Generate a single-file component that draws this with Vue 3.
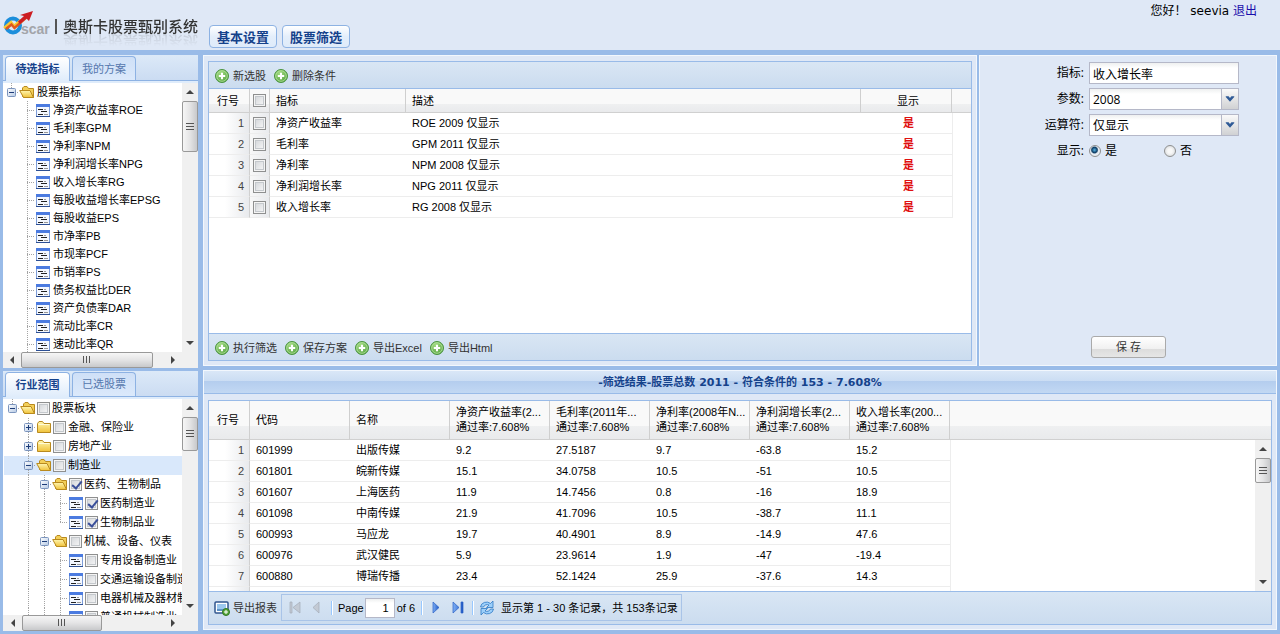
<script setup>
import { ref } from 'vue'

const indicators = ['净资产收益率ROE', '毛利率GPM', '净利率NPM', '净利润增长率NPG', '收入增长率RG', '每股收益增长率EPSG', '每股收益EPS', '市净率PB', '市现率PCF', '市销率PS', '债务权益比DER', '资产负债率DAR', '流动比率CR', '速动比率QR']

const indicatorTree = [
  { cells: ['-'], icon: 'open', text: '股票指标' },
  ...indicators.map((text) => ({ cells: ['', 't'], icon: 'leaf', text })),
]

const industryTree = [
  { cells: ['-'], icon: 'open', check: true, on: false, text: '股票板块' },
  { cells: ['', '+'], icon: 'closed', check: true, on: false, text: '金融、保险业' },
  { cells: ['', '+'], icon: 'closed', check: true, on: false, text: '房地产业' },
  { cells: ['', '-l'], icon: 'open', check: true, on: false, text: '制造业', selected: true },
  { cells: ['', 'l', '-l'], icon: 'open', check: true, on: true, text: '医药、生物制品' },
  { cells: ['', 'l', 'l', 't'], icon: 'leaf', check: true, on: true, text: '医药制造业' },
  { cells: ['', 'l', 'l', 'e'], icon: 'leaf', check: true, on: true, text: '生物制品业' },
  { cells: ['', 'l', '-l'], icon: 'open', check: true, on: false, text: '机械、设备、仪表' },
  { cells: ['', 'l', 'l', 't'], icon: 'leaf', check: true, on: false, text: '专用设备制造业' },
  { cells: ['', 'l', 'l', 't'], icon: 'leaf', check: true, on: false, text: '交通运输设备制造业' },
  { cells: ['', 'l', 'l', 't'], icon: 'leaf', check: true, on: false, text: '电器机械及器材制造业' },
  { cells: ['', 'l', 'l', 't'], icon: 'leaf', check: true, on: false, text: '普通机械制造业' },
]

const panels = [
  { id: 'indicators', tabs: ['待选指标', '我的方案'], rows: indicatorTree },
  { id: 'industries', tabs: ['行业范围', '已选股票'], rows: industryTree },
]

const conditions = [
  ['净资产收益率', 'ROE 2009 仅显示'],
  ['毛利率', 'GPM 2011 仅显示'],
  ['净利率', 'NPM 2008 仅显示'],
  ['净利润增长率', 'NPG 2011 仅显示'],
  ['收入增长率', 'RG 2008 仅显示'],
]

const resultHeads = ['净资产收益率(2...', '毛利率(2011年...', '净利率(2008年N...', '净利润增长率(2...', '收入增长率(200...']

const results = [
  ['601999', '出版传媒', '9.2', '27.5187', '9.7', '-63.8', '15.2'],
  ['601801', '皖新传媒', '15.1', '34.0758', '10.5', '-51', '10.5'],
  ['601607', '上海医药', '11.9', '14.7456', '0.8', '-16', '18.9'],
  ['601098', '中南传媒', '21.9', '41.7096', '10.5', '-38.7', '11.1'],
  ['600993', '马应龙', '19.7', '40.4901', '8.9', '-14.9', '47.6'],
  ['600976', '武汉健民', '5.9', '23.9614', '1.9', '-47', '-19.4'],
  ['600880', '博瑞传播', '23.4', '52.1424', '25.9', '-37.6', '14.3'],
  ['', '', '', '', '', '', ''],
]

const topActions = ['新选股', '删除条件']
const bottomActions = ['执行筛选', '保存方案', '导出Excel', '导出Html']

const shown = ref('yes')
</script>

<template>
  <div class="app">
    <svg class="defs" width="0" height="0" aria-hidden="true">
      <defs>
        <linearGradient id="folderFill" x1="0" y1="0" x2="0" y2="1">
          <stop offset="0" stop-color="#fff6b0" /><stop offset="1" stop-color="#f0c23a" />
        </linearGradient>
        <radialGradient id="addFill" cx=".4" cy=".3" r=".8">
          <stop offset="0" stop-color="#a4dc84" /><stop offset="1" stop-color="#4c9c38" />
        </radialGradient>
        <linearGradient id="boxFill" x1="0" y1="0" x2="1" y2="1">
          <stop offset="0" stop-color="#ffffff" /><stop offset="1" stop-color="#b4c8e4" />
        </linearGradient>
        <linearGradient id="blueFill" x1="0" y1="0" x2="1" y2="0">
          <stop offset="0" stop-color="#7fb0f5" /><stop offset="1" stop-color="#1c56c4" />
        </linearGradient>
        <symbol id="add" viewBox="0 0 16 16">
          <circle cx="8" cy="8" r="6.5" fill="url(#addFill)" stroke="#4a9440" />
          <circle cx="8" cy="8" r="5.3" fill="none" stroke="#b8e4a0" stroke-width=".8" />
          <path d="M8 4.8V11.2M4.8 8H11.2" stroke="#fff" stroke-width="2" />
        </symbol>
        <symbol id="open" viewBox="0 0 16 16">
          <path d="M3.5 12.5V4L5 2.5H8L9.5 4.5H14.5V13.5H5Z" fill="#f3cf58" stroke="#b98a1e" />
          <path d="M.7 6.5H11L14.5 13.5H4.5Z" fill="url(#folderFill)" stroke="#b98a1e" />
        </symbol>
        <symbol id="closed" viewBox="0 0 16 16">
          <path d="M1.5 13.5V4.5L3 2.5H6.5L8 4.5H14.5V13.5Z" fill="url(#folderFill)" stroke="#b98a1e" />
          <path d="M2.5 5.5H13.5" stroke="#fffbd8" />
        </symbol>
        <symbol id="leaf" viewBox="0 0 16 16">
          <rect x="1.5" y="2.5" width="13" height="12" fill="#f4f8ff" stroke="#7c9cd8" />
          <rect x="1" y="2" width="14" height="3" fill="#4b7be0" />
          <path d="M1 14.5H15" stroke="#2c4f94" />
          <path d="M3 7.5H8M6 9.5H12M3 12.5H8" stroke="#222" />
          <path d="M9 12.5H13M9 7.500H11" stroke="#999" />
        </symbol>
      </defs>
    </svg>

    <header class="top">
      <svg class="logo" width="60" height="32" viewBox="0 0 60 32" role="img" aria-label="Oscar">
        <circle cx="10" cy="16.500" r="7" fill="none" stroke="#1c8edb" stroke-width="4" />
        <path d="M1 19L8 13L11 17L18 11" fill="none" stroke="#f8c832" stroke-width="2.500" />
        <path d="M3 20L8.500 15.500L11.500 19L25 7" fill="none" stroke="#e0581c" stroke-width="2.500" />
        <path d="M17 6L30 2L26 12L23.500 9.500L17 15L15 12.500L21 7Z" fill="#cc1c22" />
        <text x="18" y="25" class="logo-text">scar</text>
        <path d="M53 10V25" stroke="#555" stroke-width="2" />
      </svg>
      <h1>奥斯卡股票甄别系统</h1>
      <nav>
        <button type="button">基本设置</button>
        <button type="button">股票筛选</button>
      </nav>
      <p class="user">您好！ seevia <a href="#">退出</a></p>
    </header>

    <main class="work">
      <aside class="side">
        <section v-for="panel in panels" :key="panel.id" class="tabpanel" :class="panel.id">
          <div class="tabs">
            <button type="button" class="tab active">{{ panel.tabs[0] }}</button>
            <button type="button" class="tab">{{ panel.tabs[1] }}</button>
          </div>
          <div class="treebox">
            <ul class="tree">
              <li v-for="row in panel.rows" :key="row.text" :class="{ selected: row.selected }">
                <svg v-for="(cell, i) in row.cells" :key="i" class="cell" viewBox="0 0 16 19" width="16" height="19">
                  <g fill="none" stroke="#a4a4a4" stroke-dasharray="1 1">
                    <path v-if="['l', 't', '+', '-l'].includes(cell)" d="M8.500 0V19" />
                    <path v-if="['e', '-'].includes(cell)" d="M8.500 0V9" />
                    <path v-if="cell && cell !== 'l'" d="M8 9.500H16" />
                  </g>
                  <g v-if="cell[0] === '-' || cell === '+'">
                    <rect x="4.500" y="5.500" width="8" height="8" rx="1" fill="url(#boxFill)" stroke="#7b94bd" />
                    <path d="M6 9.500H11" stroke="#1d3c78" />
                    <path v-if="cell === '+'" d="M8.500 7V12" stroke="#1d3c78" />
                  </g>
                </svg>
                <svg class="icon" width="16" height="16"><use :href="'#' + row.icon" /></svg>
                <label>
                  <input v-if="row.check" type="checkbox" :checked="row.on" />
                  <span>{{ row.text }}</span>
                </label>
              </li>
            </ul>
            <div class="vbar"><i class="up"></i><b></b><i class="down"></i></div>
            <div class="hbar"><i class="left"></i><b></b><i class="right"></i></div>
          </div>
        </section>
      </aside>

      <div class="content">
        <div class="upper">
          <section class="pane">
            <div class="grid">
              <div class="toolbar">
                <button v-for="a in topActions" :key="a" type="button"><svg width="16" height="16"><use href="#add" /></svg>{{ a }}</button>
              </div>
              <div class="body">
                <table class="conditions">
                  <colgroup>
                    <col class="c-num" /><col class="c-check" /><col class="c-name" /><col /><col class="c-show" /><col class="c-rest" />
                  </colgroup>
                  <thead>
                    <tr>
                      <th>行号</th>
                      <th class="check"><input type="checkbox" aria-label="全选" /></th>
                      <th>指标</th><th>描述</th><th class="center">显示</th><th class="rest"></th>
                    </tr>
                  </thead>
                  <tbody>
                    <tr v-for="(c, i) in conditions" :key="c[0]">
                      <td class="num">{{ i + 1 }}</td>
                      <td class="check"><input type="checkbox" :aria-label="c[0]" /></td>
                      <td>{{ c[0] }}</td><td>{{ c[1] }}</td><td class="yes">是</td><td class="rest"></td>
                    </tr>
                  </tbody>
                </table>
              </div>
              <div class="toolbar bottom">
                <button v-for="a in bottomActions" :key="a" type="button"><svg width="16" height="16"><use href="#add" /></svg>{{ a }}</button>
              </div>
            </div>
          </section>

          <form class="pane form" @submit.prevent>
            <label for="f-name">指标:</label>
            <input id="f-name" class="field" type="text" value="收入增长率" />
            <label for="f-year">参数:</label>
            <div class="combo">
              <select id="f-year" class="field"><option>2008</option></select>
              <svg width="17" height="20" viewBox="0 0 17 20"><path d="M4 7H7L8.500 9L10 7H13V8L8.500 13L4 8Z" fill="#2f5a96" /></svg>
            </div>
            <label for="f-op">运算符:</label>
            <div class="combo">
              <select id="f-op" class="field"><option>仅显示</option></select>
              <svg width="17" height="20" viewBox="0 0 17 20"><path d="M4 7H7L8.500 9L10 7H13V8L8.500 13L4 8Z" fill="#2f5a96" /></svg>
            </div>
            <span class="caption">显示:</span>
            <div class="radios">
              <label><input v-model="shown" type="radio" name="shown" value="yes" />是</label>
              <label><input v-model="shown" type="radio" name="shown" value="no" />否</label>
            </div>
            <button type="submit" class="save">保 存</button>
          </form>
        </div>

        <section class="pane results">
          <h2>-筛选结果-股票总数 2011 - 符合条件的 153 - 7.608%</h2>
          <div class="grid">
            <div class="body">
              <table class="stocks">
                <colgroup>
                  <col class="c-num" /><col v-for="n in 7" :key="n" class="c-val" /><col />
                </colgroup>
                <thead>
                  <tr>
                    <th>行号</th><th>代码</th><th>名称</th>
                    <th v-for="h in resultHeads" :key="h"><div>{{ h }}</div><div>通过率:7.608%</div></th>
                    <th class="rest"></th>
                  </tr>
                </thead>
                <tbody>
                  <tr v-for="(r, i) in results" :key="i">
                    <td class="num">{{ r[0] && i + 1 }}</td>
                    <td v-for="(v, j) in r" :key="j">{{ v }}</td>
                    <td class="rest"></td>
                  </tr>
                </tbody>
              </table>
              <div class="vbar"><i class="up"></i><b></b><i class="down"></i></div>
            </div>
            <div class="toolbar bottom paging">
              <button type="button">
                <svg width="16" height="16" viewBox="0 0 16 16">
                  <rect x="1" y="2" width="13" height="11" rx="1" fill="#fff" stroke="#30568f" stroke-width="1.500" />
                  <rect x="3" y="4" width="9" height="5" fill="#9cc8ee" /><path d="M3 9H12V11H3Z" fill="#5c92c8" />
                  <circle cx="12" cy="12" r="3.500" fill="#58a83c" stroke="#2f7420" /><path d="M12 10V14M10 12H14" stroke="#fff" />
                </svg>导出报表
              </button>
              <div class="pager">
                <button type="button" aria-label="第一页"><svg width="16" height="16" viewBox="0 0 16 16"><path d="M3 2H5V13H3ZM13 2V13L6 7.500Z" fill="#c3cad4" stroke="#a4acb8" stroke-width=".7" /></svg></button>
                <button type="button" aria-label="上一页"><svg width="16" height="16" viewBox="0 0 16 16"><path d="M10 2V13L4 7.500Z" fill="#c3cad4" stroke="#a4acb8" stroke-width=".7" /></svg></button>
                <span class="sep"></span>
                <label for="page">Page</label>
                <input id="page" type="text" value="1" />
                <span class="of">of 6</span>
                <span class="sep"></span>
                <button type="button" aria-label="下一页"><svg width="16" height="16" viewBox="0 0 16 16"><path d="M5 2V13L11 7.500Z" fill="url(#blueFill)" stroke="#2a60c4" stroke-width=".7" /></svg></button>
                <button type="button" aria-label="最后一页"><svg width="16" height="16" viewBox="0 0 16 16"><path d="M3 2V13L9 7.500ZM11 2H13V13H11Z" fill="url(#blueFill)" stroke="#2a60c4" stroke-width=".7" /></svg></button>
                <span class="sep"></span>
                <button type="button" aria-label="刷新"><svg width="16" height="16" viewBox="0 0 16 16">
                  <path d="M1.500 7A6 5.500 0 0 1 11.500 3.500L14 1V7.500H7.500L10 5A4 4 0 0 0 4.500 7Z" fill="#9ccffa" stroke="#2f78c4" stroke-width=".8" />
                  <path d="M14.500 9A6 5.500 0 0 1 4.500 12.500L2 15V8.500H8.500L6 11A4 4 0 0 0 11.500 9Z" fill="#9ccffa" stroke="#2f78c4" stroke-width=".8" />
                </svg></button>
                <span class="msg">显示第 1 - 30 条记录，共 153条记录</span>
              </div>
            </div>
          </div>
        </section>
      </div>
    </main>
  </div>
</template>

<style>
body {
  background: #99bbe8;
}
</style>

<style scoped>
* {
  box-sizing: border-box;
}
.app {
  display: flex;
  flex-direction: column;
  height: 100vh;
  overflow: hidden;
  background: #99bbe8;
  font: 11px/16px "Liberation Sans", "Noto Sans CJK SC", sans-serif;
  color: #000;
}
.defs {
  position: absolute;
}
button,
input,
select {
  font: inherit;
  color: inherit;
  margin: 0;
}
button {
  padding: 0;
  border: 0;
  background: none;
}

/* header */
.top {
  display: flex;
  height: 50px;
  flex: none;
  padding-left: 3px;
  background: #dfe8f6;
}
.logo {
  margin-top: 9px;
  flex: none;
}
.logo-text {
  font: bold 14px "Liberation Sans", sans-serif;
  fill: #a3a5aa;
}
h1 {
  width: 146px;
  margin: 15px 0 0;
  font: 500 15px/22px "Noto Sans CJK SC", sans-serif;
  color: #333;
  white-space: nowrap;
  height: 22px;
  -webkit-box-reflect: below -6px linear-gradient(transparent 30%, rgba(0, 0, 0, 0.2));
}
nav {
  display: flex;
  gap: 5px;
  padding-top: 25px;
}
nav button {
  width: 68px;
  height: 23px;
  border: 1px solid #8db2e3;
  border-radius: 4px;
  background: linear-gradient(#fff, #e4eefb 50%, #deebfa);
  font: bold 13px/20px "Noto Sans CJK SC", sans-serif;
  color: #15428b;
}
.user {
  margin: 2px 23px 0 auto;
  font: 12px/18px "DejaVu Sans", "Noto Sans CJK SC", sans-serif;
}
.user a {
  color: #1a0dab;
  text-decoration: none;
}

/* layout */
.work {
  flex: 1;
  min-height: 0;
  display: grid;
  grid-template-columns: 195px minmax(0, 1fr);
  gap: 5px;
  padding: 5px 3px 3px;
}
.side {
  display: grid;
  grid-template-rows: 6fr 5fr;
  gap: 3px;
  min-height: 0;
}
.content {
  display: grid;
  grid-template-rows: 6fr 5fr;
  gap: 4px;
  min-height: 0;
  padding-bottom: 1px;
}

/* side panels */
.tabpanel {
  display: flex;
  flex-direction: column;
  min-height: 0;
  background: #dfecfb;
}
.tabs {
  display: flex;
  gap: 2px;
  height: 26px;
  flex: none;
  padding: 1px 2px 0;
  border-bottom: 1px solid #8db2e3;
  background: linear-gradient(#dce9f8, #cbdcf2);
}
.tab {
  height: 24px;
  width: 64px;
  border: 1px solid #8db2e3;
  border-bottom: 0;
  border-radius: 4px 4px 0 0;
  background: linear-gradient(#cfe0f7, #dbe9fb);
  color: #5577ad;
}
.tab.active {
  width: 65px;
  height: 25px;
  background: linear-gradient(#fff, #dfecfb);
  font-weight: bold;
  color: #15428b;
}
.treebox {
  flex: 1;
  min-height: 0;
  margin-top: 2px;
  display: grid;
  grid-template: minmax(0, 1fr) 16px / minmax(0, 1fr) 16px;
  background: #f0f0f0;
}
.tree {
  list-style: none;
  margin: 0;
  padding: 0;
  overflow: hidden;
  background: #fff;
}
.industries .tree,
.industries .hbar {
  padding-left: 1px;
}
.tree li {
  display: flex;
  align-items: center;
  height: 18px;
  overflow: hidden;
  white-space: nowrap;
}
.industries li {
  height: 19px;
}
.tree .selected {
  background: #d9e8fb;
}
.cell,
.icon {
  flex: none;
}
.tree label {
  display: flex;
  align-items: center;
  gap: 2px;
  padding-left: 2px;
}
.industries label {
  padding-left: 1px;
}
input[type="checkbox"] {
  appearance: none;
  display: block;
  flex: none;
  width: 13px;
  height: 13px;
  border: 1px solid #8e8f8f;
  background: linear-gradient(135deg, #cfd2d6, #fafafa);
  box-shadow: inset 0 0 0 1px #f4f4f4, inset 0 0 0 2px #c4c8cc;
}
input[type="checkbox"]:checked::after {
  content: "";
  display: block;
  width: 4px;
  height: 8px;
  margin: 0 0 0 4px;
  border: solid #3a4f9a;
  border-width: 0 2px 2px 0;
  transform: rotate(40deg);
}

/* scrollbars */
.vbar,
.hbar {
  display: flex;
  background: #f0f0f0;
}
.vbar {
  flex-direction: column;
  width: 16px;
}
.vbar i,
.hbar i {
  display: flex;
  align-items: center;
  justify-content: center;
  width: 16px;
  height: 18px;
  flex: none;
}
.hbar i {
  width: 18px;
  height: 16px;
}
.vbar i::before,
.hbar i::before {
  content: "";
  border: 4px solid transparent;
}
.vbar .up::before {
  border-width: 0 4px 4px;
  border-bottom-color: #444;
}
.vbar .down::before {
  border-width: 4px 4px 0;
  border-top-color: #444;
}
.hbar .left::before {
  border-width: 4px 4px 4px 0;
  border-right-color: #444;
}
.hbar .right::before {
  border-width: 4px 0 4px 4px;
  border-left-color: #444;
}
.vbar .down {
  margin-top: auto;
}
.hbar .right {
  margin-left: auto;
}
.vbar b,
.hbar b {
  display: flex;
  align-items: center;
  justify-content: center;
  border: 1px solid #999;
  border-radius: 2px;
  background: linear-gradient(90deg, #f6f6f6, #e4e4e5 50%, #c8c9cb);
}
.vbar b::before {
  content: "";
  width: 8px;
  height: 8px;
  background: repeating-linear-gradient(#555 0 1px, transparent 1px 3px);
}
.hbar b {
  width: 132px;
  background: linear-gradient(#f6f6f6, #e4e4e5 50%, #c8c9cb);
}
.hbar b::before {
  content: "";
  width: 8px;
  height: 7px;
  background: repeating-linear-gradient(90deg, #555 0 1px, transparent 1px 3px);
}
.industries .hbar b {
  width: 80px;
}
.indicators .vbar b {
  height: 51px;
}
.industries .vbar b {
  height: 34px;
}
.results .vbar b {
  height: 25px;
}

/* right side panes */
.upper {
  display: grid;
  grid-template-columns: minmax(0, 1fr) 298px;
  gap: 2px;
  min-height: 0;
}
.pane {
  display: flex;
  min-width: 0;
  min-height: 0;
  padding: 5px 4px 4px;
  border: 1px solid #f2f7fd;
  background: #dfe8f6;
}
.grid {
  flex: 1;
  display: flex;
  flex-direction: column;
  min-width: 0;
  min-height: 0;
  border: 1px solid #99bbe8;
  background: #fff;
}
.toolbar {
  display: flex;
  align-items: center;
  gap: 7px;
  flex: none;
  height: 27px;
  padding: 1px 0 0 5px;
  border-bottom: 1px solid #99bbe8;
  background: linear-gradient(#d9e6f4, #cbdcef);
  color: #333;
}
.toolbar.bottom {
  border-top: 1px solid #99bbe8;
  border-bottom: 0;
}
.toolbar button {
  display: flex;
  align-items: center;
  gap: 3px;
}
.body {
  position: relative;
  flex: 1;
  min-height: 0;
  overflow: hidden;
}
table {
  width: 100%;
  table-layout: fixed;
  border-collapse: separate;
  border-spacing: 0;
}
.c-num {
  width: 41px;
}
.c-check {
  width: 20px;
}
.c-name {
  width: 136px;
}
.c-show {
  width: 91px;
}
.c-rest {
  width: 19px;
}
.c-val {
  width: 100px;
}
th,
td {
  padding: 0 2px 0 6px;
  text-align: left;
  font-weight: normal;
  white-space: nowrap;
  overflow: hidden;
}
th {
  height: 24px;
  border-right: 1px solid #cfcfcf;
  border-bottom: 1px solid #d0d0d0;
  background: linear-gradient(#f9f9f9 65%, #eff0f1 65%, #e9eaec);
}
th:first-child {
  padding-left: 8px;
}
.stocks th {
  height: 39px;
  line-height: 15px;
}
td {
  height: 21px;
  border-bottom: 1px solid #ededed;
}
th.rest {
  border-right: 0;
}
td.rest {
  border-bottom: 0;
  border-left: 1px solid #ededed;
}
.num {
  padding-right: 5px;
  border-right: 1px solid #d0d0d0;
  background: linear-gradient(90deg, #fff 40%, #e8eaed);
  text-align: right;
  color: #444;
}
.check {
  padding: 0 3px;
  border-right: 1px solid #d0d0d0;
}
td.check {
  background: linear-gradient(90deg, #f8f8f8, #e8eaed);
}
.center {
  text-align: center;
}
.yes {
  text-align: center;
  font-weight: bold;
  color: #e01010;
}

/* form */
.form {
  display: grid;
  grid-template-columns: 1fr 150px;
  grid-template-rows: 22px 22px 22px 22px 1fr;
  gap: 4px 5px;
  padding: 6px 37px 7px 0;
  font-family: "Open Sans", "Noto Sans CJK SC", sans-serif;
  font-size: 12px;
}
.form > label,
.caption {
  text-align: right;
  line-height: 22px;
}
.field {
  width: 100%;
  height: 22px;
  padding: 1px 3px 0;
  border: 1px solid #b5b8c8;
  border-radius: 0;
  background: linear-gradient(#eef0f0, #fff 5px);
  outline: 0;
}
select.field {
  appearance: none;
}
.combo {
  position: relative;
}
.combo svg {
  position: absolute;
  right: 1px;
  top: 1px;
  border-left: 1px solid #b5b8c8;
  background: linear-gradient(#fafafa, #d0d1d3);
  pointer-events: none;
}
.radios {
  display: flex;
}
.radios label {
  display: flex;
  align-items: center;
  gap: 4px;
  width: 75px;
}
input[type="radio"] {
  appearance: none;
  width: 12px;
  height: 12px;
  border: 1px solid #8e8f8f;
  border-radius: 50%;
  background: radial-gradient(#f8f8f8 30%, #d0d3d6);
}
input[type="radio"]:checked {
  background: radial-gradient(circle at 45% 40%, #58b4e4, #0d3b63 34%, #e8edf2 50%);
}
.save {
  grid-column: 2;
  align-self: end;
  width: 75px;
  height: 22px;
  margin-left: 2px;
  border: 1px solid #aaa;
  border-radius: 3px;
  background: linear-gradient(#fff, #f0f0f0 60%, #dcdcdc 60%, #e6e6e6);
  font-size: 11px;
  color: #333;
}

/* results */
.results {
  flex-direction: column;
  padding: 0;
}
h2 {
  flex: none;
  height: 23px;
  margin: 0;
  border-bottom: 1px solid #99bbe8;
  background: linear-gradient(#dae7f7, #cbddf3 45%, #b4cdee 46%, #c2d8f3);
  font: bold 11px/23px "DejaVu Sans", "Noto Sans CJK SC", sans-serif;
  text-align: center;
  color: #15428b;
}
.results .grid {
  margin: 6px 4px 4px;
}
.results .vbar {
  position: absolute;
  top: 39px;
  right: 0;
  bottom: 0;
}
.paging {
  height: 33px;
  gap: 4px;
  align-items: stretch;
  padding-bottom: 3px;
  padding-top: 2px;
}
.pager {
  display: flex;
  align-items: center;
  width: 401px;
  padding-left: 5px;
  border: 1px solid #a9c4e8;
  color: #000;
  white-space: nowrap;
}
.pager button {
  margin-right: 6px;
}
.sep {
  width: 2px;
  height: 14px;
  margin-right: 5px;
  border-left: 1px solid #98c8ff;
  border-right: 1px solid #fff;
}
.pager input {
  width: 30px;
  height: 20px;
  margin: 0 2px 0 1px;
  padding: 0 5px;
  border: 1px solid #b5b8c8;
  background: linear-gradient(#eef0f0, #fff 4px);
  text-align: right;
}
.of {
  margin-right: 6px;
}
</style>
